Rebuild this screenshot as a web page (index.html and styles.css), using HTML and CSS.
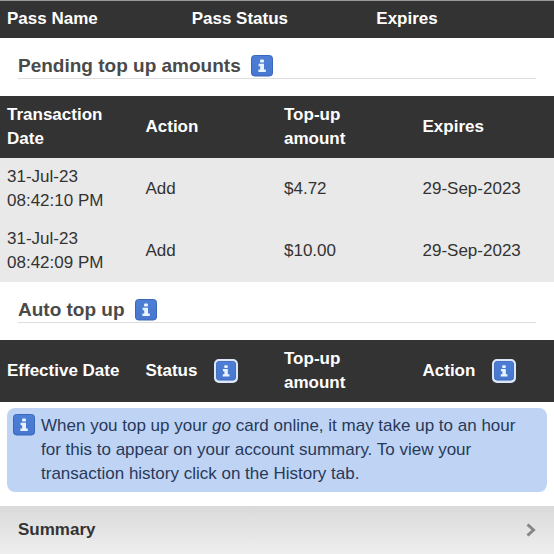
FILE: index.html
```html
<!DOCTYPE html>
<html lang="en">
<head>
  <meta charset="UTF-8" />
  <meta name="viewport" content="width=device-width, initial-scale=1.0" />
  <title>Card account</title>
  <link rel="stylesheet" href="styles.css">
</head>
<body>
  <!-- info icon shared by the headings, tables and notice -->
  <svg width="0" height="0" class="defs" aria-hidden="true">
    <defs>
      <linearGradient id="infoFill" x1="0" y1="0" x2="0" y2="1">
        <stop offset="0" stop-color="#4d7fd6" />
        <stop offset="1" stop-color="#4777cf" />
      </linearGradient>
    </defs>
    <symbol id="info" viewBox="0 0 22 22">
      <rect x="0.5" y="0.5" width="21" height="20.5" rx="3" fill="url(#infoFill)" stroke="#3b67bb" />
      <rect x="9" y="4.6" width="4" height="3" rx="1" fill="#e9f3ff" />
      <path d="M7.6 8.8H13v5.8h1.8V17H7.4v-2.4h1.8v-3.4H7.6z" fill="#e9f3ff" />
    </symbol>
  </svg>

  <main>
    <table class="pass-table">
      <thead>
        <tr>
          <th>Pass Name</th>
          <th>Pass Status</th>
          <th>Expires</th>
        </tr>
      </thead>
    </table>

    <div class="section-title">
      <h2>Pending top up amounts</h2>
      <button type="button" class="info-btn" aria-label="About pending top up amounts"><svg><use href="#info" /></svg></button>
    </div>

    <table>
      <thead>
        <tr>
          <th>Transaction Date</th>
          <th>Action</th>
          <th>Top-up amount</th>
          <th>Expires</th>
        </tr>
      </thead>
      <tbody>
        <tr>
          <td>31-Jul-23 08:42:10&nbsp;PM</td>
          <td>Add</td>
          <td>$4.72</td>
          <td>29-Sep-2023</td>
        </tr>
        <tr>
          <td>31-Jul-23 08:42:09&nbsp;PM</td>
          <td>Add</td>
          <td>$10.00</td>
          <td>29-Sep-2023</td>
        </tr>
      </tbody>
    </table>

    <div class="section-title">
      <h2>Auto top up</h2>
      <button type="button" class="info-btn" aria-label="About auto top up"><svg><use href="#info" /></svg></button>
    </div>

    <table>
      <thead>
        <tr>
          <th>Effective Date</th>
          <th>
            <div class="th-info">
              Status
              <button type="button" class="info-btn outlined" aria-label="About status"><svg><use href="#info" /></svg></button>
            </div>
          </th>
          <th>Top-up amount</th>
          <th>
            <div class="th-info">
              Action
              <button type="button" class="info-btn outlined" aria-label="About action"><svg><use href="#info" /></svg></button>
            </div>
          </th>
        </tr>
      </thead>
    </table>

    <div class="notice">
      <svg class="notice-icon" aria-hidden="true"><use href="#info" /></svg>
      <p>When you top up your <em>go</em> card online, it may take up to an hour for this to appear on your account summary. To view your transaction history click on the History tab.</p>
    </div>

    <a href="#" class="summary-link">
      Summary
      <svg class="chevron" viewBox="0 0 10 14" aria-hidden="true">
        <path d="M1.5 1.5L7.5 7l-6 5.5" fill="none" stroke="#858585" stroke-width="3" />
      </svg>
    </a>
  </main>
</body>
</html>
```

FILE: styles.css
```css
* {
  box-sizing: border-box;
}

body {
  margin: 0;
  background: #ffffff;
  color: #333;
  font-family: "Liberation Sans", Arial, Helvetica, sans-serif;
  font-size: 17px;
  line-height: 24px;
}

.defs {
  position: absolute;
}

table {
  width: 100%;
  table-layout: fixed;
  border-collapse: collapse;
}

th, td {
  padding: 7px 14px 7px 7px;
  text-align: left;
  vertical-align: middle;
}

th {
  background: #333;
  color: white;
}

td {
  background: #e9e9e9;
}

.pass-table th {
  background: linear-gradient(#999 1px, #333 1px);
}

.section-title {
  display: flex;
  align-items: center;
  gap: 10px;
  height: 25px;
  margin: 16px 18px 17px;
  border-bottom: 1px solid #ddd;
}

.section-title h2 {
  margin: 0;
  font-size: 19px;
  color: #4a4a4a;
}

.info-btn {
  display: block;
  padding: 0;
  border: none;
  border-radius: 4px;
  background: none;
  cursor: pointer;
}

.info-btn svg, .notice-icon {
  display: block;
  width: 22px;
  height: 22px;
}

.th-info {
  display: flex;
  align-items: center;
  gap: 17px;
}

.outlined {
  border: 2px solid #dbe6f8;
  border-radius: 5px;
  background: #dbe6f8;
}

.outlined svg {
  width: 20px;
  height: 20px;
}

.notice {
  display: flex;
  gap: 6px;
  margin: 6px 7px 14px;
  padding: 6px 14px 6px 6px;
  border-radius: 8px;
  background: #bfd4f4;
  color: #28395a;
}

.notice-icon {
  flex: none;
}

.notice p {
  margin: 0;
}

.summary-link {
  display: flex;
  align-items: center;
  justify-content: space-between;
  padding: 12px 18px;
  background: linear-gradient(#dadada, #eee);
  color: #333;
  font-weight: bold;
  text-decoration: none;
}

.chevron {
  width: 10px;
  height: 14px;
}
```
